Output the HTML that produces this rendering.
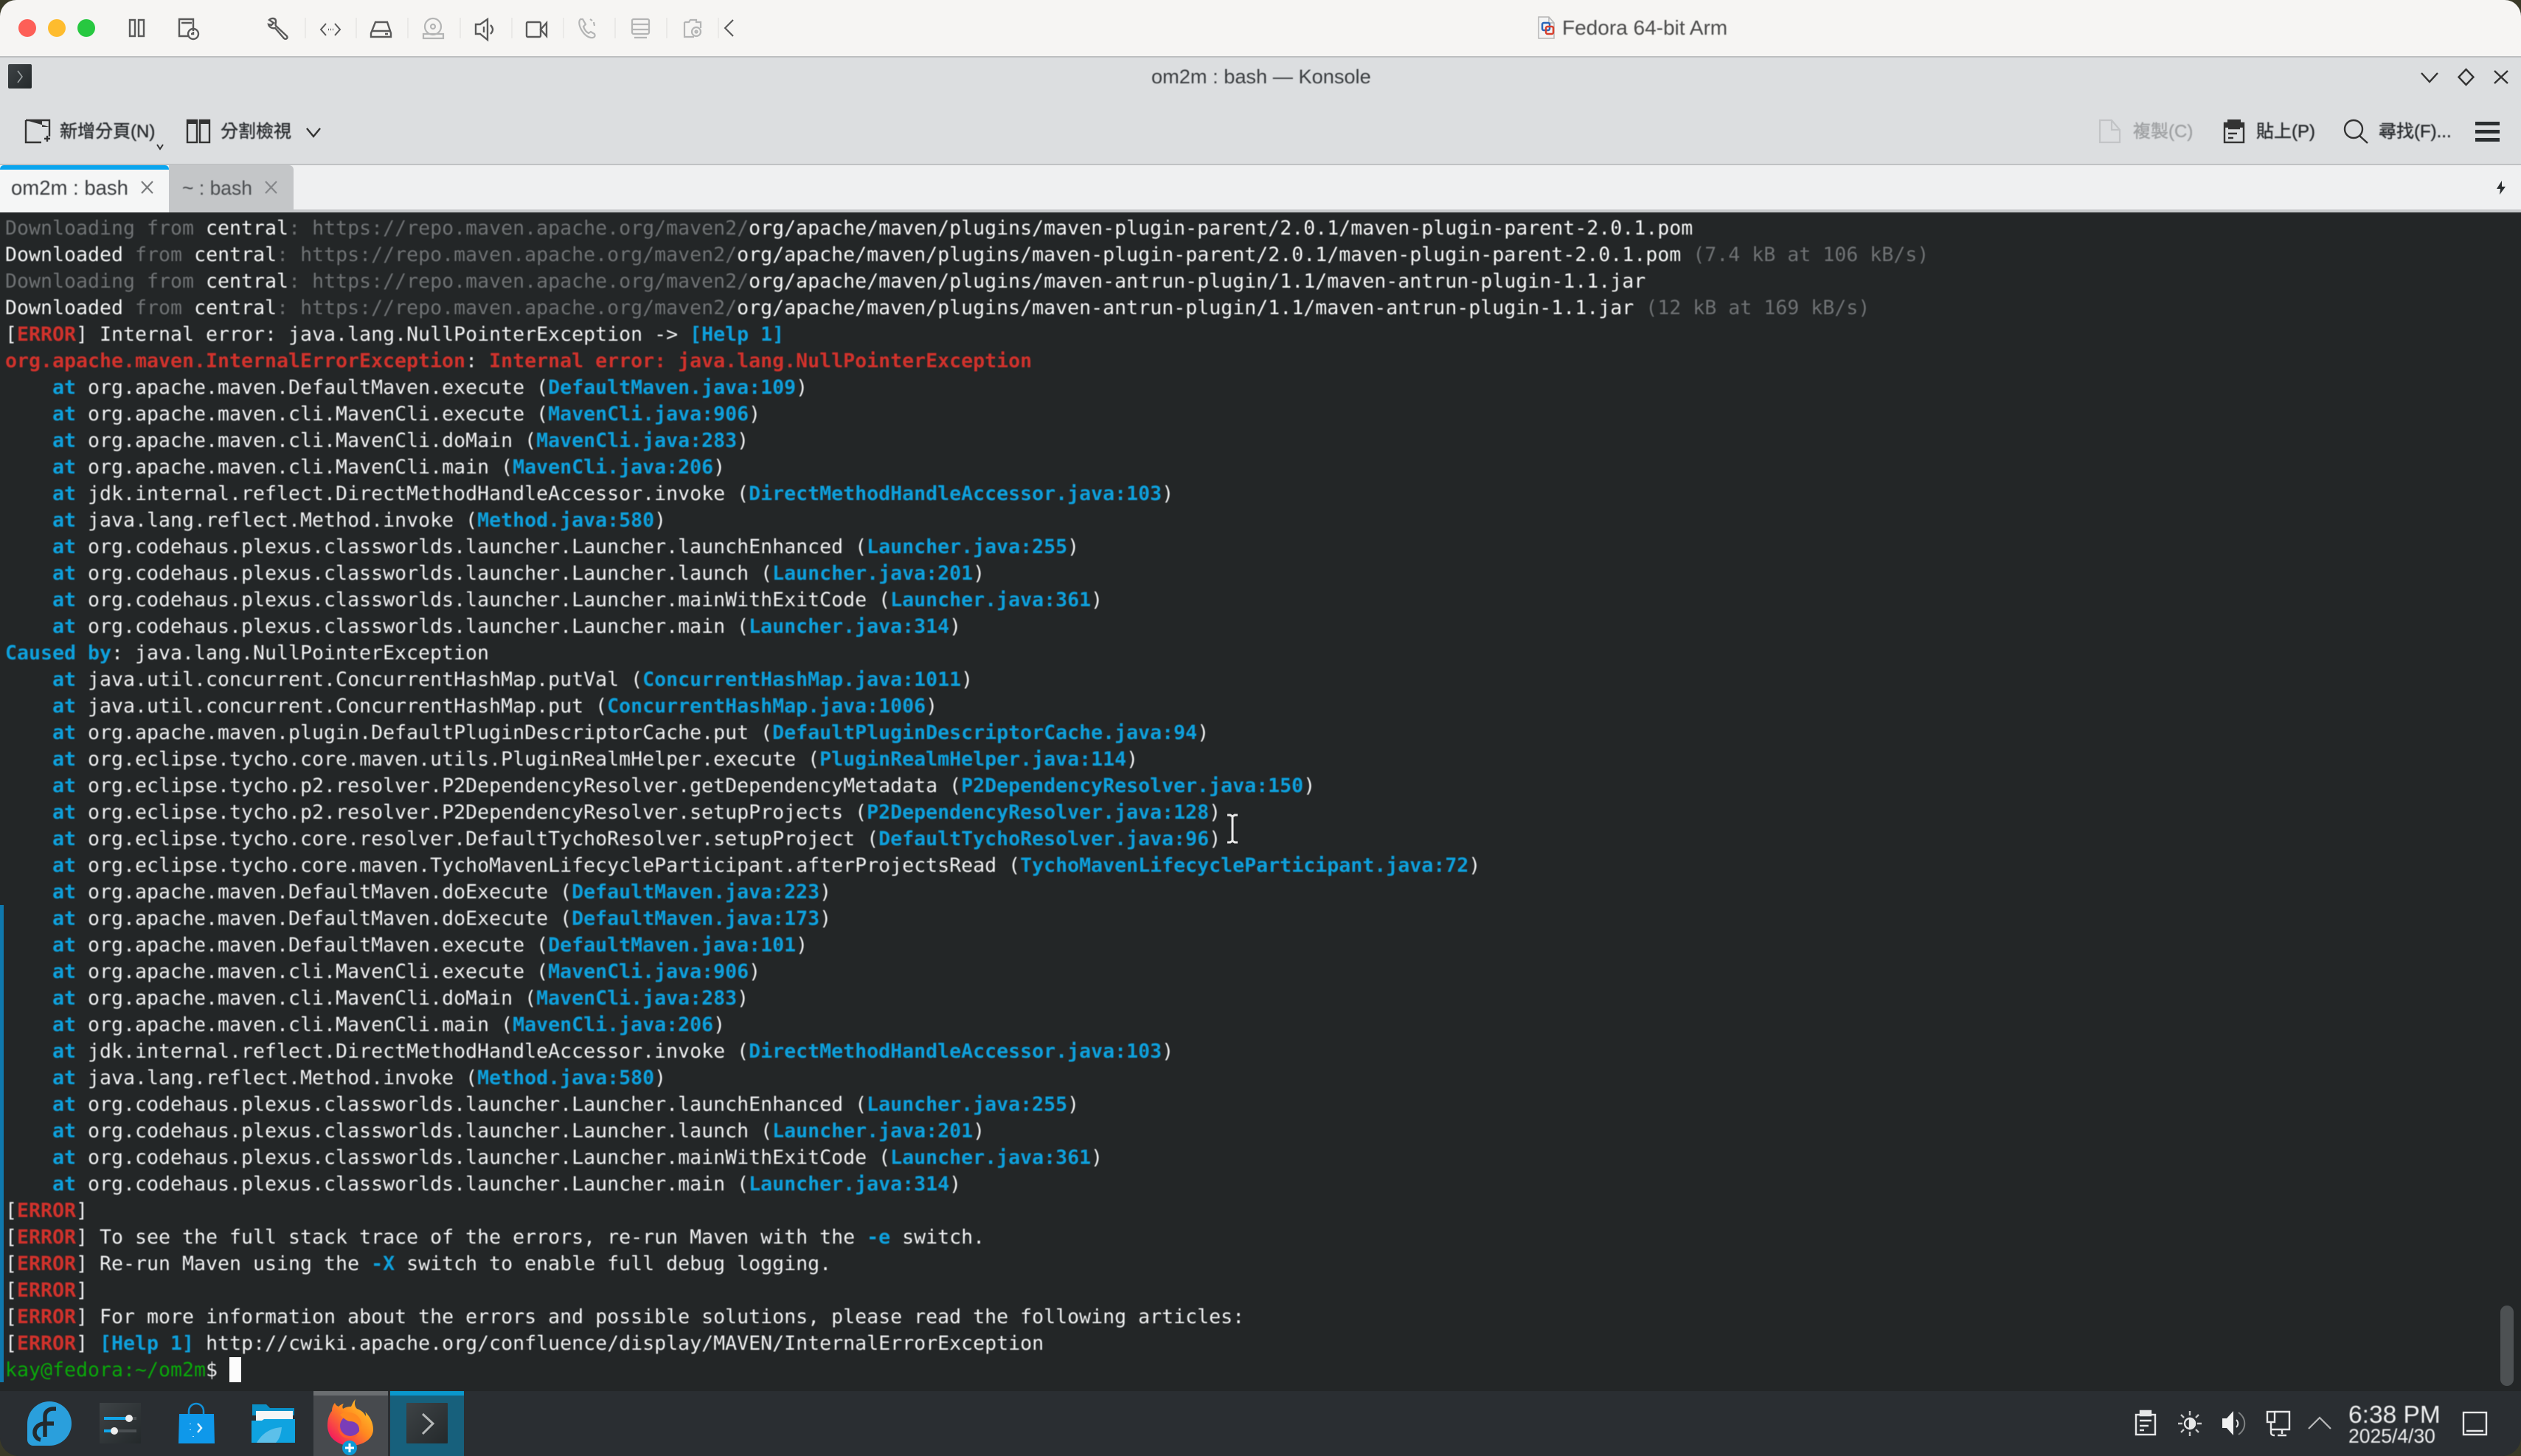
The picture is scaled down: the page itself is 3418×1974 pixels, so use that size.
<!DOCTYPE html>
<html><head><meta charset="utf-8"><title>Fedora 64-bit Arm</title>
<style>
html,body{margin:0;padding:0;background:#3a3a28}
#w{position:relative;width:3418px;height:1974px;overflow:hidden;background:#3a3a28}
#win{position:absolute;left:0;top:0;width:3418px;height:1974px;border-radius:22px 22px 26px 26px;overflow:hidden;background:#232627}
.a{position:absolute;white-space:nowrap}
.s{font-family:"Liberation Sans","Noto Sans CJK TC",sans-serif}
.t{filter:blur(.4px)}
#term{position:absolute;left:7px;top:292px;margin:0;font:26.58px/36px "DejaVu Sans Mono",monospace;color:#eff0f1;white-space:pre;filter:blur(.5px);text-rendering:geometricPrecision}
.g{color:#6f7274}.b{color:#f4f5f5}.r{font-weight:bold;color:#d0322c}.c{font-weight:bold;color:#0ea0dc}.h{color:#0ea0dc}.p{color:#0aa80a}
svg{position:absolute;left:0;top:0}
</style></head><body><div id="w"><div id="win">
<div class="a" style="left:0;top:0;width:3418px;height:76px;background:#f6f5f3"></div>
<div class="a" style="left:0;top:76px;width:3418px;height:2px;background:#bdbfc0"></div>
<div class="a" style="left:0;top:78px;width:3418px;height:144px;background:#dcdee0"></div>
<div class="a" style="left:0;top:222px;width:3418px;height:2px;background:#c0c2c4"></div>
<div class="a" style="left:0;top:224px;width:3418px;height:60px;background:#eff0f1"></div>
<div class="a" style="left:0;top:284px;width:3418px;height:4px;background:#c6c8ca"></div>
<div class="a" style="left:229px;top:224px;width:169px;height:62px;background:#c4c6c8;border-radius:0 6px 0 0"></div>
<div class="a" style="left:0;top:224px;width:229px;height:64px;background:#f5f6f6"></div>
<div class="a" style="left:0;top:224px;width:229px;height:6px;background:#0aa5ee;border-radius:5px 5px 0 0"></div>
<div class="a" style="left:0;top:288px;width:3418px;height:1598px;background:#232627"></div>
<div class="a" style="left:0;top:1227px;width:5px;height:647px;background:#0f78ad"></div>
<pre id="term"><span class="g">Downloading from</span> <span class="b">central</span><span class="g">: https://repo.maven.apache.org/maven2/</span><span class="b">org/apache/maven/plugins/maven-plugin-parent/2.0.1/maven-plugin-parent-2.0.1.pom</span>
<span class="b">Downloaded</span> <span class="g">from</span> <span class="b">central</span><span class="g">: https://repo.maven.apache.org/maven2/</span><span class="b">org/apache/maven/plugins/maven-plugin-parent/2.0.1/maven-plugin-parent-2.0.1.pom</span> <span class="g">(7.4 kB at 106 kB/s)</span>
<span class="g">Downloading from</span> <span class="b">central</span><span class="g">: https://repo.maven.apache.org/maven2/</span><span class="b">org/apache/maven/plugins/maven-antrun-plugin/1.1/maven-antrun-plugin-1.1.jar</span>
<span class="b">Downloaded</span> <span class="g">from</span> <span class="b">central</span><span class="g">: https://repo.maven.apache.org/maven2/</span><span class="b">org/apache/maven/plugins/maven-antrun-plugin/1.1/maven-antrun-plugin-1.1.jar</span> <span class="g">(12 kB at 169 kB/s)</span>
[<span class="r">ERROR</span>] Internal error: java.lang.NullPointerException -&gt; <span class="c">[Help 1]</span>
<span class="r">org.apache.maven.InternalErrorException</span>: <span class="r">Internal error: java.lang.NullPointerException</span>
    <span class="c">at</span> org.apache.maven.DefaultMaven.execute (<span class="c">DefaultMaven.java:109</span>)
    <span class="c">at</span> org.apache.maven.cli.MavenCli.execute (<span class="c">MavenCli.java:906</span>)
    <span class="c">at</span> org.apache.maven.cli.MavenCli.doMain (<span class="c">MavenCli.java:283</span>)
    <span class="c">at</span> org.apache.maven.cli.MavenCli.main (<span class="c">MavenCli.java:206</span>)
    <span class="c">at</span> jdk.internal.reflect.DirectMethodHandleAccessor.invoke (<span class="c">DirectMethodHandleAccessor.java:103</span>)
    <span class="c">at</span> java.lang.reflect.Method.invoke (<span class="c">Method.java:580</span>)
    <span class="c">at</span> org.codehaus.plexus.classworlds.launcher.Launcher.launchEnhanced (<span class="c">Launcher.java:255</span>)
    <span class="c">at</span> org.codehaus.plexus.classworlds.launcher.Launcher.launch (<span class="c">Launcher.java:201</span>)
    <span class="c">at</span> org.codehaus.plexus.classworlds.launcher.Launcher.mainWithExitCode (<span class="c">Launcher.java:361</span>)
    <span class="c">at</span> org.codehaus.plexus.classworlds.launcher.Launcher.main (<span class="c">Launcher.java:314</span>)
<span class="c">Caused by</span>: java.lang.NullPointerException
    <span class="c">at</span> java.util.concurrent.ConcurrentHashMap.putVal (<span class="c">ConcurrentHashMap.java:1011</span>)
    <span class="c">at</span> java.util.concurrent.ConcurrentHashMap.put (<span class="c">ConcurrentHashMap.java:1006</span>)
    <span class="c">at</span> org.apache.maven.plugin.DefaultPluginDescriptorCache.put (<span class="c">DefaultPluginDescriptorCache.java:94</span>)
    <span class="c">at</span> org.eclipse.tycho.core.maven.utils.PluginRealmHelper.execute (<span class="c">PluginRealmHelper.java:114</span>)
    <span class="c">at</span> org.eclipse.tycho.p2.resolver.P2DependencyResolver.getDependencyMetadata (<span class="c">P2DependencyResolver.java:150</span>)
    <span class="c">at</span> org.eclipse.tycho.p2.resolver.P2DependencyResolver.setupProjects (<span class="c">P2DependencyResolver.java:128</span>)
    <span class="c">at</span> org.eclipse.tycho.core.resolver.DefaultTychoResolver.setupProject (<span class="c">DefaultTychoResolver.java:96</span>)
    <span class="c">at</span> org.eclipse.tycho.core.maven.TychoMavenLifecycleParticipant.afterProjectsRead (<span class="c">TychoMavenLifecycleParticipant.java:72</span>)
    <span class="c">at</span> org.apache.maven.DefaultMaven.doExecute (<span class="c">DefaultMaven.java:223</span>)
    <span class="c">at</span> org.apache.maven.DefaultMaven.doExecute (<span class="c">DefaultMaven.java:173</span>)
    <span class="c">at</span> org.apache.maven.DefaultMaven.execute (<span class="c">DefaultMaven.java:101</span>)
    <span class="c">at</span> org.apache.maven.cli.MavenCli.execute (<span class="c">MavenCli.java:906</span>)
    <span class="c">at</span> org.apache.maven.cli.MavenCli.doMain (<span class="c">MavenCli.java:283</span>)
    <span class="c">at</span> org.apache.maven.cli.MavenCli.main (<span class="c">MavenCli.java:206</span>)
    <span class="c">at</span> jdk.internal.reflect.DirectMethodHandleAccessor.invoke (<span class="c">DirectMethodHandleAccessor.java:103</span>)
    <span class="c">at</span> java.lang.reflect.Method.invoke (<span class="c">Method.java:580</span>)
    <span class="c">at</span> org.codehaus.plexus.classworlds.launcher.Launcher.launchEnhanced (<span class="c">Launcher.java:255</span>)
    <span class="c">at</span> org.codehaus.plexus.classworlds.launcher.Launcher.launch (<span class="c">Launcher.java:201</span>)
    <span class="c">at</span> org.codehaus.plexus.classworlds.launcher.Launcher.mainWithExitCode (<span class="c">Launcher.java:361</span>)
    <span class="c">at</span> org.codehaus.plexus.classworlds.launcher.Launcher.main (<span class="c">Launcher.java:314</span>)
[<span class="r">ERROR</span>] 
[<span class="r">ERROR</span>] To see the full stack trace of the errors, re-run Maven with the <span class="c">-e</span> switch.
[<span class="r">ERROR</span>] Re-run Maven using the <span class="c">-X</span> switch to enable full debug logging.
[<span class="r">ERROR</span>] 
[<span class="r">ERROR</span>] For more information about the errors and possible solutions, please read the following articles:
[<span class="r">ERROR</span>] <span class="c">[Help 1]</span> http://cwiki.apache.org/confluence/display/MAVEN/InternalErrorException
<span class="p">kay@fedora:~/om2m</span>$ </pre>
<div class="a" style="left:311px;top:1840px;width:16px;height:34px;background:#fcfcfc"></div>
<div class="a" style="left:3390px;top:1770px;width:18px;height:109px;border-radius:9px;background:#4d5153"></div>
<div class="a" style="left:0;top:1886px;width:3418px;height:88px;background:#2a2e32"></div>
<div class="a" style="left:425px;top:1886px;width:101px;height:88px;background:#474a4e"></div>
<div class="a" style="left:425px;top:1886px;width:101px;height:6px;background:#6b6e71"></div>
<div class="a" style="left:529px;top:1886px;width:100px;height:88px;background:#17607c"></div>
<div class="a" style="left:529px;top:1886px;width:100px;height:6px;background:#0a97cc"></div>

<svg width="3418" height="1974" viewBox="0 0 3418 1974" fill="none">
<defs>
<linearGradient id="ff" x1="1" y1="0" x2="0" y2="1"><stop offset="0" stop-color="#ffd92e"/><stop offset=".45" stop-color="#ff8a1f"/><stop offset=".85" stop-color="#f5225a"/><stop offset="1" stop-color="#e8168a"/></linearGradient>
<linearGradient id="dk" x1="0" y1="0" x2="1" y2="1"><stop offset="0" stop-color="#3e4346"/><stop offset="1" stop-color="#24292b"/></linearGradient>
</defs>
<circle cx="37" cy="38" r="12" fill="#fd5f57"/><circle cx="77" cy="38" r="12" fill="#febc2e"/><circle cx="117" cy="38" r="12" fill="#27c840"/>
<g stroke="#5a5a5a" stroke-width="2.4">
<rect x="176" y="27" width="7" height="22"/><rect x="188" y="27" width="7" height="22"/>
<path d="M262 42V26H243V49H256M246 31h14"/><circle cx="262" cy="46" r="7"/><path d="M262 43v3h-3"/>
<path d="M365 27c3-3 9-3 9 2 0 3-1 4 0 6l15 14c2 3-2 5-4 3L373 38c-4 1-8-1-9-5l4 1 3-3z" />
<path d="M442 32l-7 8 7 8M454 32l7 8-7 8" stroke-width="2"/><path d="M445 40h1M448 40h1M451 40h1"/>
<path d="M509 30h16l5 15v5h-27v-5z"/><path d="M504 42h26M522 46h4"/>
<path d="M645 33h6l10-7v28l-10-8h-6z"/><path d="M665 34c4 4 4 8 0 12M656 36v8"/>
<rect x="714" y="30" width="19" height="20" rx="1.5"/><path d="M733 40l8-9v18z"/>
</g>
<g stroke="#b4b5b5" stroke-width="2.2">
<circle cx="587" cy="36" r="11"/><circle cx="587" cy="36" r="3"/><rect x="574" y="46" width="27" height="6"/>
<path d="M787 26c-3 3-2 10 3 17 4 6 10 9 14 8 3-1 3-3 2-5l-5-3-3 2c-4-2-6-6-7-9l3-3-4-7zM800 26l3 2M805 30l1 5"/>
<rect x="857" y="26" width="23" height="20" rx="2"/><path d="M857 33h23M857 40h23M860 51h17"/>
<path d="M928 30v20h13M928 30h6l2-3h8v3h6v8"/><circle cx="944" cy="43" r="6"/><circle cx="944" cy="43" r="1.5"/>
</g>
<path d="M414 24v28M483 24v28M553 24v28M624 24v28M694 24v28M764 24v28M834 24v28M904 24v28M974 24v28" stroke="#e6e5e3" stroke-width="1.5"/>
<path d="M994 27l-11 11 11 11" stroke="#555" stroke-width="2"/>

<rect x="11" y="87" width="32" height="33" rx="2" fill="url(#dk)"/><path d="M24 96l6 8-6 8" stroke="#9aa0a2" stroke-width="1.6"/>
<g stroke="#333" stroke-width="2.4">
<path d="M3283 99l11 12 11-12"/><path d="M3343.500 94l10 10.500-10 10.500-10-10.500z"/><path d="M3382 96l18 17M3400 96l-18 17"/>
<path d="M35 163h32v22M35 163v30h21"/><path d="M60 188h8M64 184v8"/>
<path d="M213 196l4 6 4-6" stroke-width="2"/>
<rect x="254" y="163" width="13" height="30"/><rect x="271" y="163" width="13" height="30"/>
<path d="M416 174l9 11 9-11"/>
<rect x="3016" y="167" width="26" height="26"/><path d="M3021 174h16M3021 181h12M3021 187h7" stroke-width="2.6"/>
<circle cx="3191" cy="175" r="12"/><path d="M3199 184l11 10"/>
</g>
<path d="M35 163h22v9h10M254 163h13v5h-13zM271 163h13v5h-13z" fill="#333"/>
<path d="M3020 162h18v6h5v5h-28v-5h5z" fill="#333"/>
<path d="M2847 163h16l11 13v17h-27z M2863 163v13h11" stroke="#c2c4c6" stroke-width="2.2"/>
<rect x="3356" y="165" width="33" height="5" fill="#2a2e30"/><rect x="3356" y="176" width="33" height="5" fill="#2a2e30"/><rect x="3356" y="187" width="33" height="5" fill="#2a2e30"/>
<path d="M3392 245l-7 11h5l-1 8 8-11h-5z" fill="#2a2e30"/>
<path d="M192 246l15 16M207 246l-15 16" stroke="#7a7c7e" stroke-width="2.2"/>
<path d="M360 246l15 16M375 246l-15 16" stroke="#85878a" stroke-width="2.2"/>

<path d="M2086 23h14l7 8v21h-21z" fill="#f4f4f4" stroke="#b5b5b5" stroke-width="1.500"/><path d="M2100 23v8h7" stroke="#b5b5b5" stroke-width="1.500"/>
<rect x="2091" y="31" width="10" height="10" rx="2" stroke="#2a66b8" stroke-width="2.500"/><rect x="2096" y="36" width="10" height="10" rx="2" stroke="#d8402e" stroke-width="2.500"/>

<path d="M1664 1105h4l3 2 3-2h4M1671 1107v34M1664 1142h4l3-2 3 2h4" stroke="#e8e8e8" stroke-width="3"/>

<path d="M67 1900a30 30 0 0 1 30 30 30 30 0 0 1-30 30H45a8 8 0 0 1-8-8v-22a30 30 0 0 1 30-30z" fill="#2a9fdc"/>
<path d="M55 1952a10 10 0 0 1-8-10c0-7 6-12 14-12h12M61 1948v-28c0-6 5-10 11-10h4" stroke="#222a2e" stroke-width="5.500"/>

<rect x="135" y="1902" width="56" height="55" fill="url(#dk)"/>
<rect x="141" y="1921" width="44" height="4" fill="#4a4f52"/><rect x="141" y="1921" width="34" height="4" fill="#12a5e8"/><circle cx="175" cy="1923" r="5" fill="#eee"/>
<rect x="141" y="1938" width="44" height="4" fill="#4a4f52"/><rect x="141" y="1938" width="14" height="4" fill="#12a5e8"/><circle cx="155" cy="1940" r="5" fill="#eee"/>

<path d="M256 1918v-5a10 10 0 0 1 20 0v5" stroke="#1290d8" stroke-width="2.500"/>
<path d="M243 1917h47l1 40h-49z" fill="#0f98ea"/>
<path d="M268 1930l5 6-5 6" stroke="#dff3ff" stroke-width="2.500"/><path d="M258 1930v1M258 1938v1M262 1947v1" stroke="#bfe6ff" stroke-width="2"/>

<path d="M342 1904h19l5 5h33v10h-57z" fill="#0a8fc6"/><rect x="347" y="1913" width="50" height="14" fill="#f5f6f6"/>
<path d="M341 1926h14l3-2h42v32h-59z" fill="#0fa3e0"/><path d="M348 1956c7-12 18-20 34-21-1 9-3 16-8 21z" fill="#5cc0ea"/>

<path d="M482 1897c-2 6-1 10 2 13 6 2 9 5 12 10 0-3 0-4-1-6 7 7 11 15 11 24 0 13-14 22-31 22-17 0-31-11-31-27 0-9 2-15 6-20 0-4 1-7 4-11 1 3 3 4 5 5 2-2 4-3 7-4-2 3-2 5-1 7 3-2 7-3 11-3 2-4 3-7 6-10z" fill="url(#ff)"/>
<circle cx="475" cy="1933" r="14" fill="#7a3db8"/>
<path d="M461 1918c4-4 18-5 24 2 6 6 7 14 2 20 1-9-6-13-12-13-4 0-8-3-14-9z" fill="#ff8a1f"/>
<path d="M458 1932c3 12 14 20 27 13-5 8-27 9-27-13z" fill="#ff5a2f"/>
<circle cx="474" cy="1963" r="10" fill="#0b9ad6"/><path d="M474 1957v12M468 1963h12" stroke="#fff" stroke-width="3"/>

<rect x="551" y="1902" width="56" height="55" rx="1" fill="url(#dk)"/><path d="M573 1917l14 13-14 14" stroke="#b5b8b8" stroke-width="3"/>

<g stroke="#e6e7e8" stroke-width="2.400">
<rect x="2896" y="1918" width="26" height="27"/><path d="M2901 1926h16M2901 1933h12M2901 1939h6"/>
<path d="M2902 1913h14v6h-14z" fill="#e6e7e8"/>
<circle cx="2969" cy="1930" r="7"/><path d="M2969 1923a7 7 0 0 1 0 14z" fill="#e6e7e8"/>
<path d="M2969 1913v6M2969 1941v6M2953 1930h6M2979 1930h6M2957 1918l4 4M2977 1938l4 4M2981 1918l-4 4M2961 1938l-4 4" stroke="#c8c9ca"/>
<rect x="3074" y="1914" width="10" height="14"/><path d="M3084 1914h20v24h-26M3079 1928v14c0 3 2 4 4 4h1M3088 1946h12M3094 1938v6"/>
<rect x="3340" y="1915" width="31" height="30"/><path d="M3344 1940h23"/>
</g>
<path d="M3013 1923h6l9-10v33l-9-10h-6z" fill="#f0f1f1"/><path d="M3032 1925c3 3 3 7 0 10" stroke="#e6e7e8" stroke-width="2"/><path d="M3035 1915c11 8 11 22 0 30" stroke="#7e8182" stroke-width="2"/>
<path d="M3130 1937l15-15 15 15" stroke="#b9babb" stroke-width="2.200"/>
</svg>

<div class="a s t" style="left:2118px;top:21px;font-size:28px;line-height:34px;color:#4a4a4a">Fedora 64-bit Arm</div>
<div class="a s t" style="left:1561px;top:87px;font-size:27.2px;line-height:34px;color:#3a3d40">om2m : bash — Konsole</div>
<div class="a s t" style="left:81px;top:163px;font-size:24px;line-height:32px;color:#2a2d30;-webkit-text-stroke:.4px #2a2d30">新增分頁(N)</div>
<div class="a s t" style="left:299px;top:163px;font-size:24px;line-height:32px;color:#2a2d30;-webkit-text-stroke:.4px #2a2d30">分割檢視</div>
<div class="a s t" style="left:2892px;top:163px;font-size:24px;line-height:32px;color:#9fa1a3;-webkit-text-stroke:.4px #9fa1a3">複製(C)</div>
<div class="a s t" style="left:3059px;top:163px;font-size:24px;line-height:32px;color:#2a2d30;-webkit-text-stroke:.4px #2a2d30">貼上(P)</div>
<div class="a s t" style="left:3225px;top:163px;font-size:24px;line-height:32px;color:#2a2d30;-webkit-text-stroke:.4px #2a2d30">尋找(F)...</div>
<div class="a s t" style="left:15px;top:238px;font-size:27.5px;line-height:34px;color:#3a3d40">om2m : bash</div>
<div class="a s t" style="left:247px;top:238px;font-size:26.5px;line-height:34px;color:#4a4d50">~ : bash</div>
<div class="a s t" style="left:3184px;top:1900px;font-size:33.5px;line-height:38px;color:#eff0f1">6:38 PM</div>
<div class="a s t" style="left:3184px;top:1932px;font-size:26.5px;line-height:30px;color:#eff0f1">2025/4/30</div>
</div></div></body></html>
